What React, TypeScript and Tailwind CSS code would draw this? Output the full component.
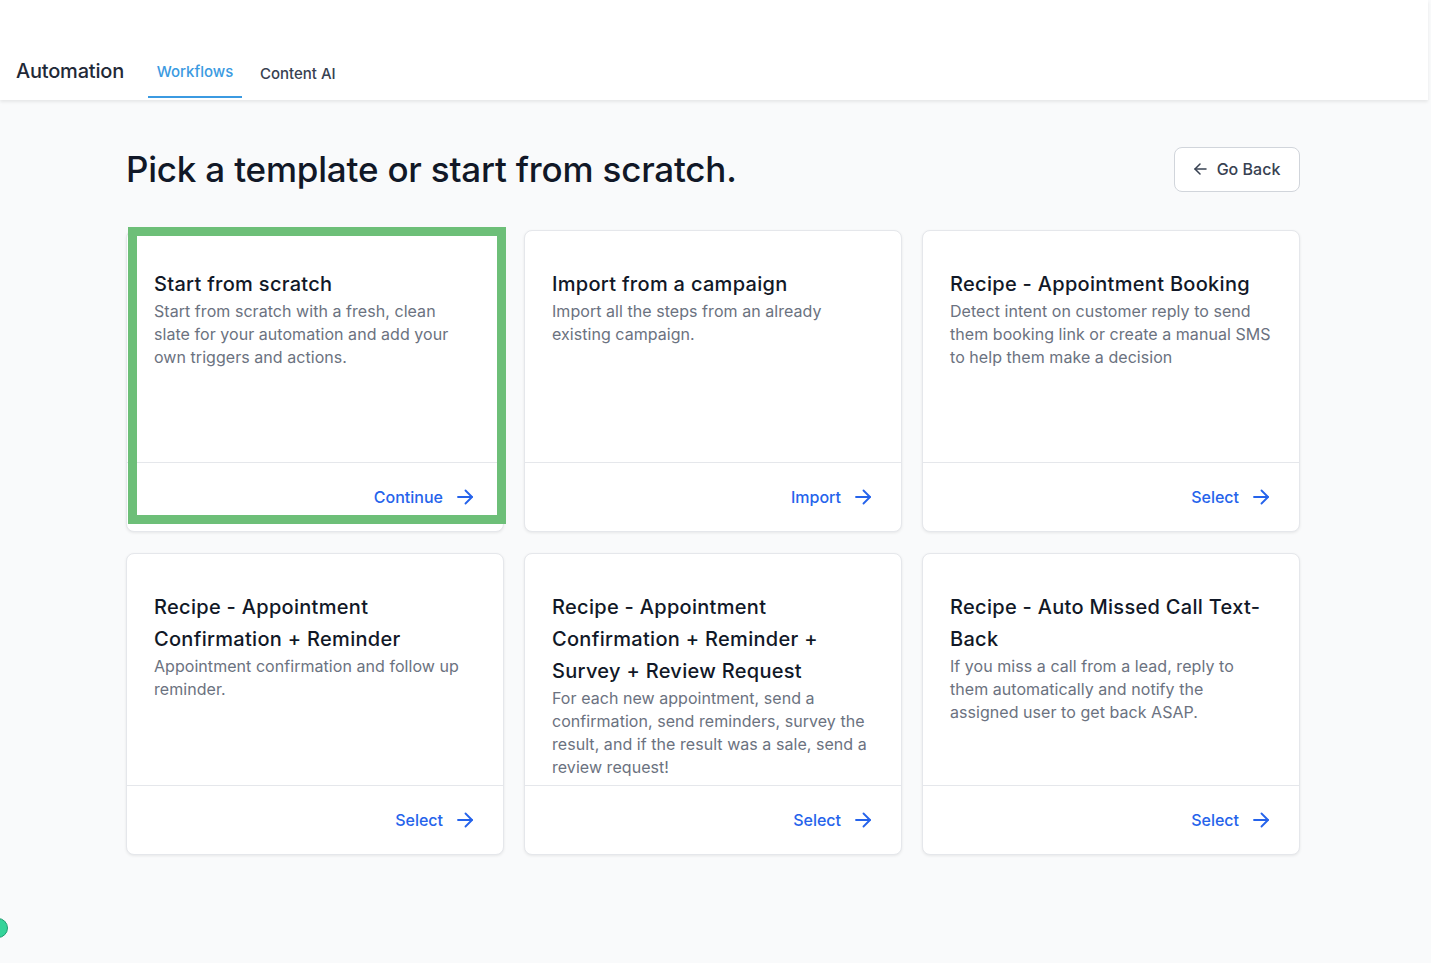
import React from 'react';

type Template = {
  title: string;
  description: string;
  action: string;
  highlighted?: boolean;
};

const templates: Template[] = [
  {
    title: 'Start from scratch',
    description: 'Start from scratch with a fresh, clean slate for your automation and add your own triggers and actions.',
    action: 'Continue',
    highlighted: true,
  },
  {
    title: 'Import from a campaign',
    description: 'Import all the steps from an already existing campaign.',
    action: 'Import',
  },
  {
    title: 'Recipe - Appointment Booking',
    description: 'Detect intent on customer reply to send them booking link or create a manual SMS to help them make a decision',
    action: 'Select',
  },
  {
    title: 'Recipe - Appointment Confirmation + Reminder',
    description: 'Appointment confirmation and follow up reminder.',
    action: 'Select',
  },
  {
    title: 'Recipe - Appointment Confirmation + Reminder + Survey + Review Request',
    description: 'For each new appointment, send a confirmation, send reminders, survey the result, and if the result was a sale, send a review request!',
    action: 'Select',
  },
  {
    title: 'Recipe - Auto Missed Call Text-Back',
    description: 'If you miss a call from a lead, reply to them automatically and notify the assigned user to get back ASAP.',
    action: 'Select',
  },
];

const ArrowRightIcon = () => (
  <svg width="16" height="16" viewBox="0 0 16 16" fill="none" stroke="currentColor" strokeWidth="1.8" strokeLinecap="round" strokeLinejoin="round">
    <path d="M1 8h14" />
    <path d="M8.5 1.5 15 8l-6.5 6.5" />
  </svg>
);

const ArrowLeftIcon = () => (
  <svg width="13" height="12" viewBox="0 0 13 12" fill="none" stroke="currentColor" strokeWidth="1.5" strokeLinecap="round" strokeLinejoin="round">
    <path d="M12 6H1" />
    <path d="M6 1 1 6l5 5" />
  </svg>
);

const TemplateCard: React.FC<{ template: Template }> = ({ template }) => (
  <div className="relative flex h-[302px] flex-col rounded-lg border border-[#e5e7eb] bg-white shadow-[0_1px_3px_rgba(0,0,0,0.08)]">
    <div className="h-[231px] overflow-hidden pl-[27px] pr-[28px] pt-[37px]">
      <h3 className="text-[20px] font-medium leading-[32px] tracking-[0.3px] text-[#111827]">{template.title}</h3>
      <p className="text-[16px] leading-[23px] tracking-[0.05px] text-[#6b7280]">{template.description}</p>
    </div>
    <div className="flex flex-1 items-center justify-end border-t border-[#e5e7eb] pr-[30px]">
      <button className="flex items-center gap-[14px] text-[16px] font-medium text-[#2563eb]">
        <span>{template.action}</span>
        <ArrowRightIcon />
      </button>
    </div>
    {template.highlighted && (
      <div className="pointer-events-none absolute left-[1px] top-[-4px] h-[297px] w-[378px] border-[9px] border-[#6dbf78]" />
    )}
  </div>
);

export default function App() {
  return (
    <div className="min-h-[963px] bg-[#f9fafb] font-['Inter','Liberation_Sans',sans-serif]">
      <header className="flex h-[100px] w-[1428px] items-end bg-white pb-[2px] pl-[16px] shadow-[0_2px_3px_rgba(0,0,0,0.08)]">
        <h1 className="mb-[13px] text-[20px] font-medium leading-[28px] tracking-[-0.2px] text-[#1f2937]">Automation</h1>
        <nav className="ml-[24px] flex items-end">
          <div className="flex h-[50px] w-[94px] items-center justify-center border-b-2 border-[#3b9ae1] text-[15px] font-medium text-[#3b9ae1]">
            Workflows
          </div>
          <div className="ml-[18px] flex h-[50px] items-center pt-[2px] text-[15px] font-medium text-[#374151]">
            Content AI
          </div>
        </nav>
      </header>

      <main className="ml-[126px] w-[1174px] pt-[43px]">
        <div className="flex items-center justify-between">
          <h2 className="text-[35px] font-medium tracking-[-0.2px] text-[#111827]">Pick a template or start from scratch.</h2>
          <button className="flex h-[45px] w-[126px] items-center justify-center gap-[10px] rounded-lg border border-[#d1d5db] bg-white text-[16px] font-medium text-[#374151]">
            <ArrowLeftIcon />
            Go Back
          </button>
        </div>

        <div className="mt-[34px] grid grid-cols-3 gap-x-[20px] gap-y-[21px]">
          {templates.map((t) => (
            <TemplateCard key={t.title} template={t} />
          ))}
        </div>
      </main>

      <div className="absolute left-[-12px] top-[918px] h-[20px] w-[20px] rounded-full border border-[#1f9d70] bg-[#34d399]" />
    </div>
  );
}
